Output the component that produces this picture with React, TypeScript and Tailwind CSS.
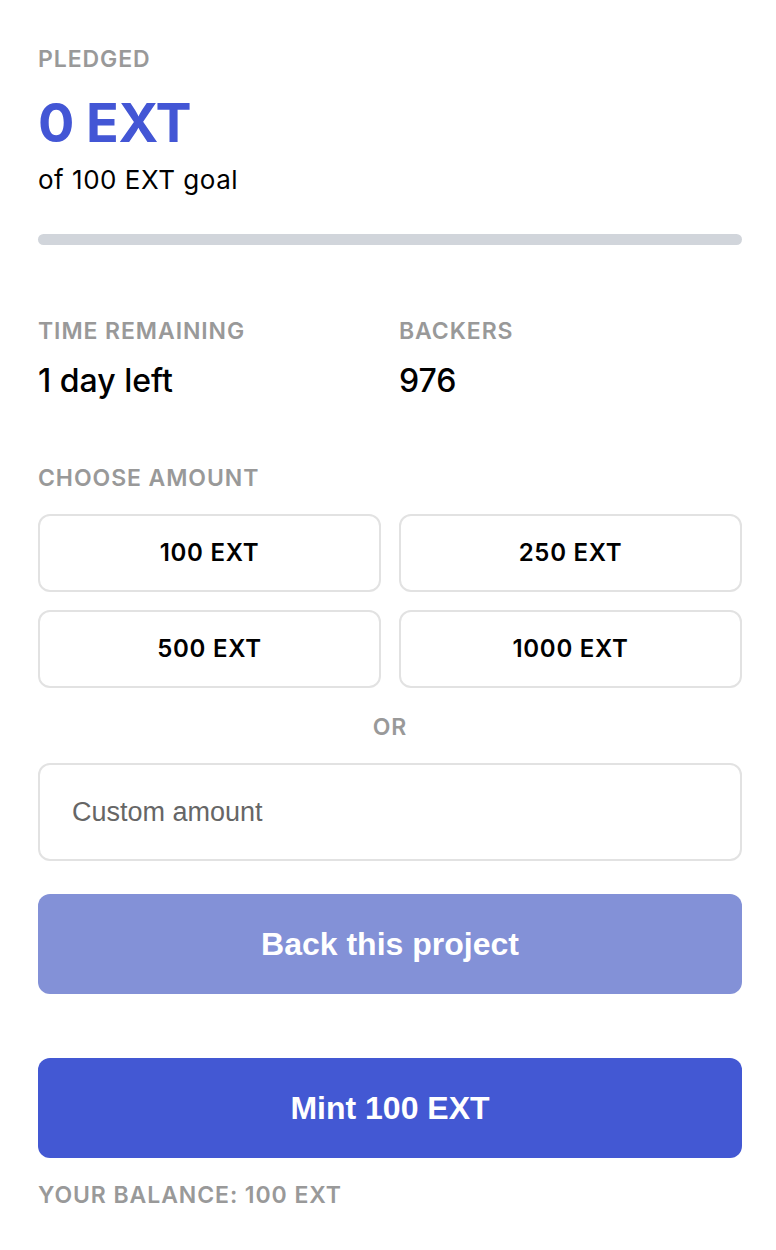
import React from "react";

const label = "text-[23px] leading-[28px] font-semibold tracking-[0.04em] text-[#999999] uppercase";
const arial = "font-['Liberation_Sans',Arial,sans-serif]";

export default function App() {
  const amounts = ["100 EXT", "250 EXT", "500 EXT", "1000 EXT"];
  return (
    <div className="min-h-[1250px] bg-white pl-[38px] pr-[34px] pt-[45px] font-['Inter','Noto_Sans',sans-serif] text-black">
      <div className={label}>Pledged</div>
      <div className="mt-[23px] text-[54px] leading-[54px] font-bold tracking-[-0.01em] text-[#4356d5]">0 EXT</div>
      <div className="mt-[14px] text-[26px] leading-[32px] tracking-[0.02em]">of 100 EXT goal</div>
      <div className="mt-[38px] h-[11px] w-full rounded-full bg-[#d1d5db]" />

      <div className="mt-[72px] grid grid-cols-2 gap-x-[18px]">
        <div>
          <div className={label}>Time Remaining</div>
          <div className="mt-[16px] text-[32px] leading-[40px] font-medium">1 day left</div>
        </div>
        <div>
          <div className={label}>Backers</div>
          <div className="mt-[16px] text-[32px] leading-[40px] font-medium">976</div>
        </div>
      </div>

      <div className={label + " mt-[63px]"}>Choose Amount</div>
      <div className="mt-[22px] grid grid-cols-2 gap-[18px]">
        {amounts.map((a) => (
          <button
            key={a}
            className="h-[78px] rounded-[12px] border-2 border-[#e2e2e2] bg-white text-[24px] font-semibold tracking-[0.03em] text-black"
          >
            {a}
          </button>
        ))}
      </div>
      <div className="mt-[25px] text-center text-[23px] leading-[28px] font-semibold tracking-[0.04em] text-[#999999]">OR</div>
      <div className="mt-[22px] flex h-[98px] items-center rounded-[12px] border-2 border-[#e2e2e2] px-[32px]">
        <span className={arial + " text-[27px] text-[#666666]"}>Custom amount</span>
      </div>
      <button className={arial + " mt-[33px] flex h-[100px] w-full items-center justify-center rounded-[12px] bg-[#8391d7] text-[32px] font-bold text-white"}>
        Back this project
      </button>
      <button className={arial + " mt-[64px] flex h-[100px] w-full items-center justify-center rounded-[12px] bg-[#4358d3] text-[32px] font-bold text-white"}>
        Mint 100 EXT
      </button>
      <div className={label + " mt-[23px]"}>Your Balance: 100 EXT</div>
    </div>
  );
}
